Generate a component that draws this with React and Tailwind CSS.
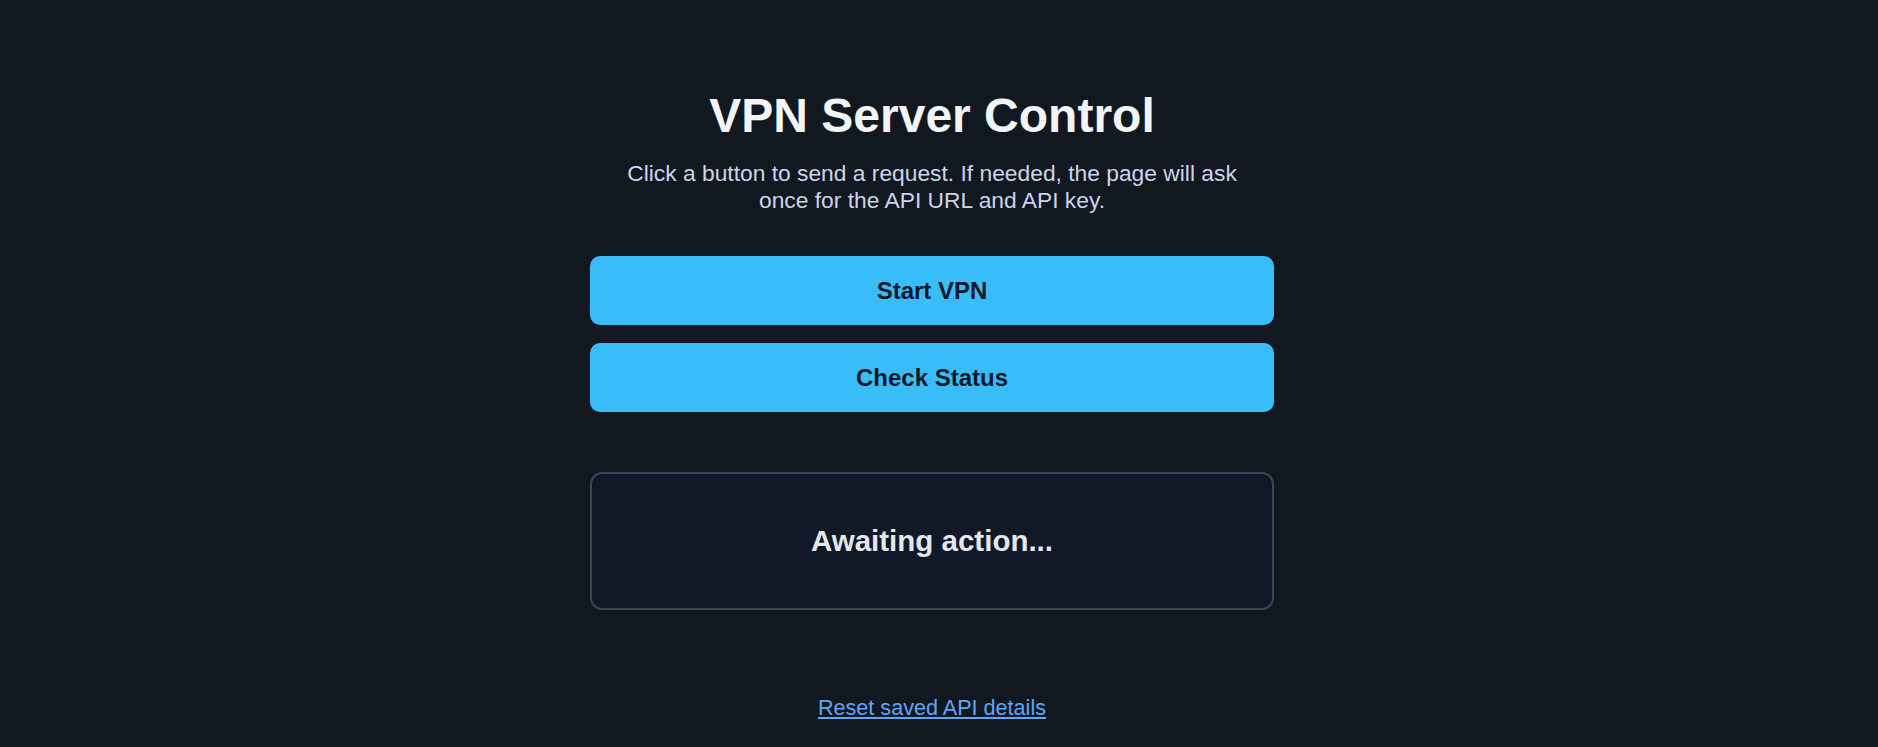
import React, { useState } from 'react'

// VPN control page: two action buttons, a status panel and a reset link
export default function App() {
  const [status, setStatus] = useState('Awaiting action...')

  return (
    <div
      className="min-h-screen bg-[#12181f] flex justify-center pr-[14px]"
      style={{ fontFamily: '"Liberation Sans", Arial, sans-serif' }}
    >
      <div className="w-[684px] flex flex-col items-center pt-[92px]">
        <h1 className="text-[48px] leading-none font-bold text-[#f3f4f6]">
          VPN Server Control
        </h1>
        <p className="mt-[20px] max-w-[640px] text-center text-[22.8px] leading-[27px] text-[#cbd4ee]">
          Click a button to send a request. If needed, the page will ask once for the API URL and API key.
        </p>

        {/* Actions */}
        <div className="mt-[42px] w-full flex flex-col gap-[18px]">
          <button
            onClick={() => setStatus('Starting VPN...')}
            className="h-[69px] w-full rounded-[10px] bg-[#38bdf8] text-[24px] font-bold text-[#0f172a]"
          >
            Start VPN
          </button>
          <button
            onClick={() => setStatus('Checking status...')}
            className="h-[69px] w-full rounded-[10px] bg-[#38bdf8] text-[24px] font-bold text-[#0f172a]"
          >
            Check Status
          </button>
        </div>

        {/* Status panel */}
        <div className="mt-[60px] h-[138px] w-full rounded-[12px] border-[2.5px] border-[#3d4555] bg-[#111827] flex items-center justify-center">
          <span className="text-[29.5px] font-bold text-[#e5e7eb]">{status}</span>
        </div>

        <a
          href="#"
          onClick={(e) => e.preventDefault()}
          className="mt-[87px] text-[21.6px] leading-none text-[#60a5fa] underline"
        >
          Reset saved API details
        </a>
      </div>
    </div>
  )
}
